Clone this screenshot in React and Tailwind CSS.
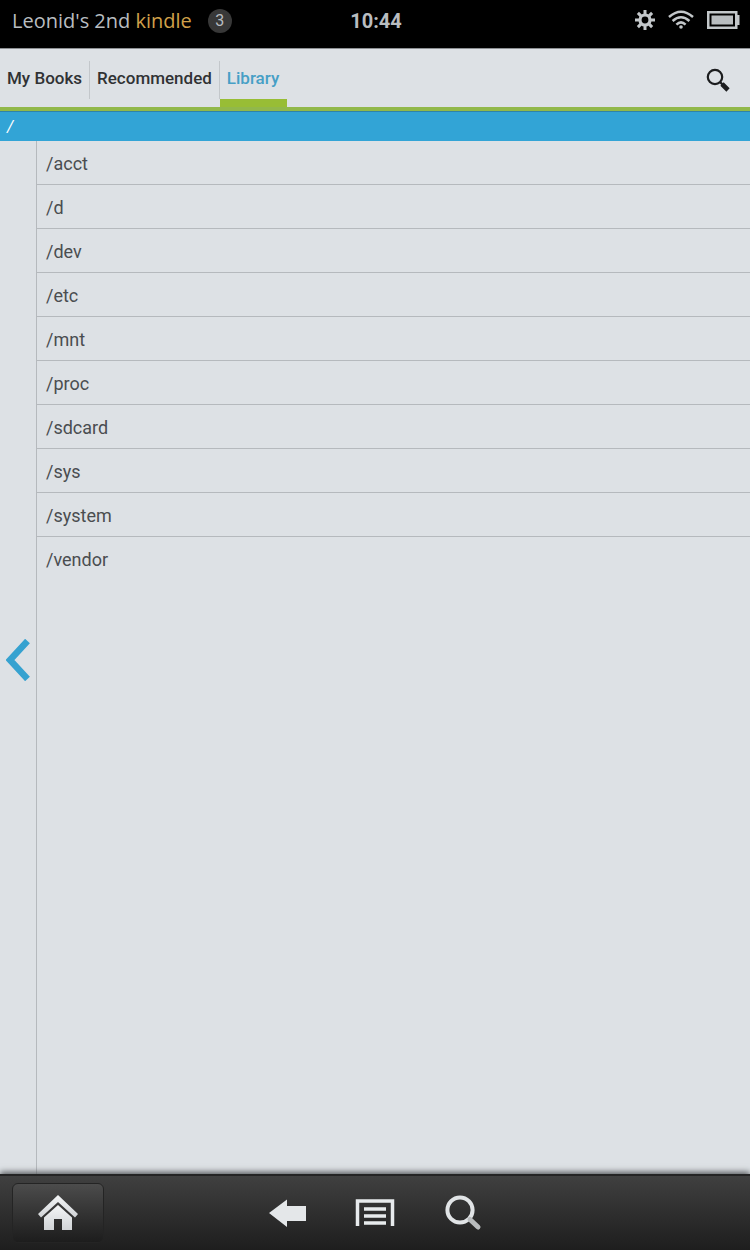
import React, { useState } from "react";

const tabs = ["My Books", "Recommended", "Library"];

const folders = [
  "/acct",
  "/d",
  "/dev",
  "/etc",
  "/mnt",
  "/proc",
  "/sdcard",
  "/sys",
  "/system",
  "/vendor",
];

const GearIcon = () => (
  <svg width="20" height="20" viewBox="0 0 20 20" aria-hidden="true">
    <circle cx="10" cy="10" r="5" fill="none" stroke="#c3c7ca" strokeWidth="3.2" />
    <g stroke="#c3c7ca" strokeWidth="3">
      <path d="M10 0v4M10 16v4M0 10h4M16 10h4M2.9 2.9l3 3M14.1 14.1l3 3M17.1 2.9l-3 3M5.9 14.1l-3 3" />
    </g>
  </svg>
);

const WifiIcon = () => (
  <svg width="26" height="20" viewBox="0 0 26 20" fill="none" aria-hidden="true">
    <g stroke="#c3c7ca" strokeWidth="2.5">
      <path d="M1 7Q13 -3.6 25 7" />
      <path d="M4.6 11Q13 3.4 21.4 11" />
      <path d="M8.4 14.6Q13 10.2 17.6 14.6" />
    </g>
    <circle cx="13" cy="17" r="1.8" fill="#c3c7ca" />
  </svg>
);

const BatteryIcon = () => (
  <svg width="33" height="18" viewBox="0 0 33 18" aria-hidden="true">
    <rect x="1.25" y="1.25" width="28" height="15.5" fill="none" stroke="#c3c7ca" strokeWidth="2.5" />
    <rect x="4.5" y="4.5" width="21.5" height="9" fill="#b9bdc0" />
    <rect x="30" y="4" width="2.5" height="10" fill="#c3c7ca" />
  </svg>
);

const StatusBar = () => {
  return (
    <header className="grid h-12 grid-cols-[1fr_auto_1fr] items-center bg-black pb-1.5 pl-3 pr-2.5 text-[#b9bdc0]">
      <div className="flex items-center gap-4">
        <p className="font-['Open_Sans',sans-serif] text-xl">
          Leonid's 2nd <span className="text-[#d0a04a]">kindle</span>
        </p>
        <span className="flex h-6 w-6 items-center justify-center rounded-full bg-[#383838] text-base">
          3
        </span>
      </div>
      <time className="text-xl font-bold">10:44</time>
      <div className="flex items-center justify-end gap-[13px] pb-0.5">
        <GearIcon />
        <WifiIcon />
        <BatteryIcon />
      </div>
    </header>
  );
};

const TabBar = ({ active, onChange }) => {
  return (
    <nav className="flex h-[63px] items-stretch justify-between border-b-4 border-t border-b-[#91b84a] border-t-[#8d9093] bg-[#dde1e5]">
      <div className="flex">
        {tabs.map((tab) => (
          <div key={tab} className="group flex flex-col">
            <button
              type="button"
              onClick={() => onChange(tab)}
              className={
                "mt-3 h-[38px] border-r border-[#c3c7cb] px-[7px] pb-0.5 text-[17px] font-medium group-last:border-transparent " +
                (tab === active ? "text-[#469fc6]" : "text-[#303234]")
              }
            >
              {tab}
            </button>
            {tab === active && <span className="mt-auto h-2 bg-[#98bd35]"></span>}
          </div>
        ))}
      </div>
      <button type="button" aria-label="Search" className="mr-4 px-1 pt-1">
        <svg width="24" height="24" viewBox="0 0 24 24" fill="none" aria-hidden="true">
          <circle cx="9" cy="9" r="7.2" stroke="#1c1d1f" strokeWidth="2.2" />
          <path d="M14 14l3 3" stroke="#1c1d1f" strokeWidth="2.4" />
          <path d="M16 16l6 6" stroke="#1c1d1f" strokeWidth="4.6" />
        </svg>
      </button>
    </nav>
  );
};

const BottomBar = () => {
  return (
    <footer className="grid h-[76px] grid-cols-[1fr_auto_1fr] items-center border-t-2 border-[#242424] bg-linear-to-b from-[#404040] to-[#1e1e1e] px-3 shadow-[0_-2px_6px_#55585b]">
      <button
        type="button"
        aria-label="Home"
        className="flex h-[60px] w-[92px] items-center justify-center rounded-md border border-[#242424] bg-linear-to-b from-[#4c4c4c] to-[#1d1d1d]"
      >
        <svg width="42" height="36" viewBox="0 0 42 36" aria-hidden="true">
          <defs>
            <linearGradient id="metal" x1="0" y1="0" x2="0" y2="1">
              <stop offset="0" stopColor="#f4f6f7" />
              <stop offset="1" stopColor="#d0d3d6" />
            </linearGradient>
          </defs>
          <path d="M21 0L41 19L38 22.5L21 7L4 22.5L1 19Z" fill="url(#metal)" />
          <path d="M21 10L35 22.5V35H25V24H17V35H7V22.5Z" fill="url(#metal)" />
        </svg>
      </button>
      <div className="flex items-center gap-12">
        <button type="button" aria-label="Back">
          <svg width="40" height="36" viewBox="0 0 40 36" aria-hidden="true">
            <path d="M2 18L20 4.5V11H39V26H20V32Z" fill="#e4e7e9" />
          </svg>
        </button>
        <button type="button" aria-label="Menu">
          <svg width="40" height="36" viewBox="0 0 40 36" fill="none" stroke="#e8ebed" aria-hidden="true">
            <path d="M2.5 31V6H37.5V31" strokeWidth="3.5" />
            <path d="M9 14H31M9 21H31M9 28H31" strokeWidth="3.5" />
          </svg>
        </button>
        <button type="button" aria-label="Find">
          <svg width="40" height="40" viewBox="0 0 40 40" fill="none" aria-hidden="true">
            <circle cx="17" cy="17" r="12.6" stroke="#e1e4e6" strokeWidth="4" />
            <path d="M27 26.5l8 7.5" stroke="#b9bcbe" strokeWidth="5" strokeLinecap="round" />
          </svg>
        </button>
      </div>
    </footer>
  );
};

const App = () => {
  const [active, setActive] = useState("Library");

  return (
    <div className="flex min-h-screen flex-col bg-[#dde1e5] font-[Roboto,sans-serif]">
      <StatusBar />
      <TabBar active={active} onChange={setActive} />
      <div className="h-[30px] border-t border-[#2f83a8] bg-[#32a4d6] px-[7px] text-base italic leading-[30px] text-white">
        /
      </div>
      <main className="flex flex-1">
        <button
          type="button"
          aria-label="Up one folder"
          className="flex w-[37px] items-center justify-center border-r border-[#b5b9bd] pt-1"
        >
          <svg width="24" height="42" viewBox="0 0 24 42" fill="none" aria-hidden="true">
            <path d="M21.5 2L4 21L21.5 40" stroke="#36a2d0" strokeWidth="6.5" />
          </svg>
        </button>
        <ul className="flex-1">
          {folders.map((folder) => (
            <li key={folder} className="h-11 border-b border-[#b5b9bd] last:border-transparent">
              <a href="#" className="block px-[9px] text-lg leading-[46px] text-[#4a4d50]">
                {folder}
              </a>
            </li>
          ))}
        </ul>
      </main>
      <BottomBar />
    </div>
  );
};

export default App;
